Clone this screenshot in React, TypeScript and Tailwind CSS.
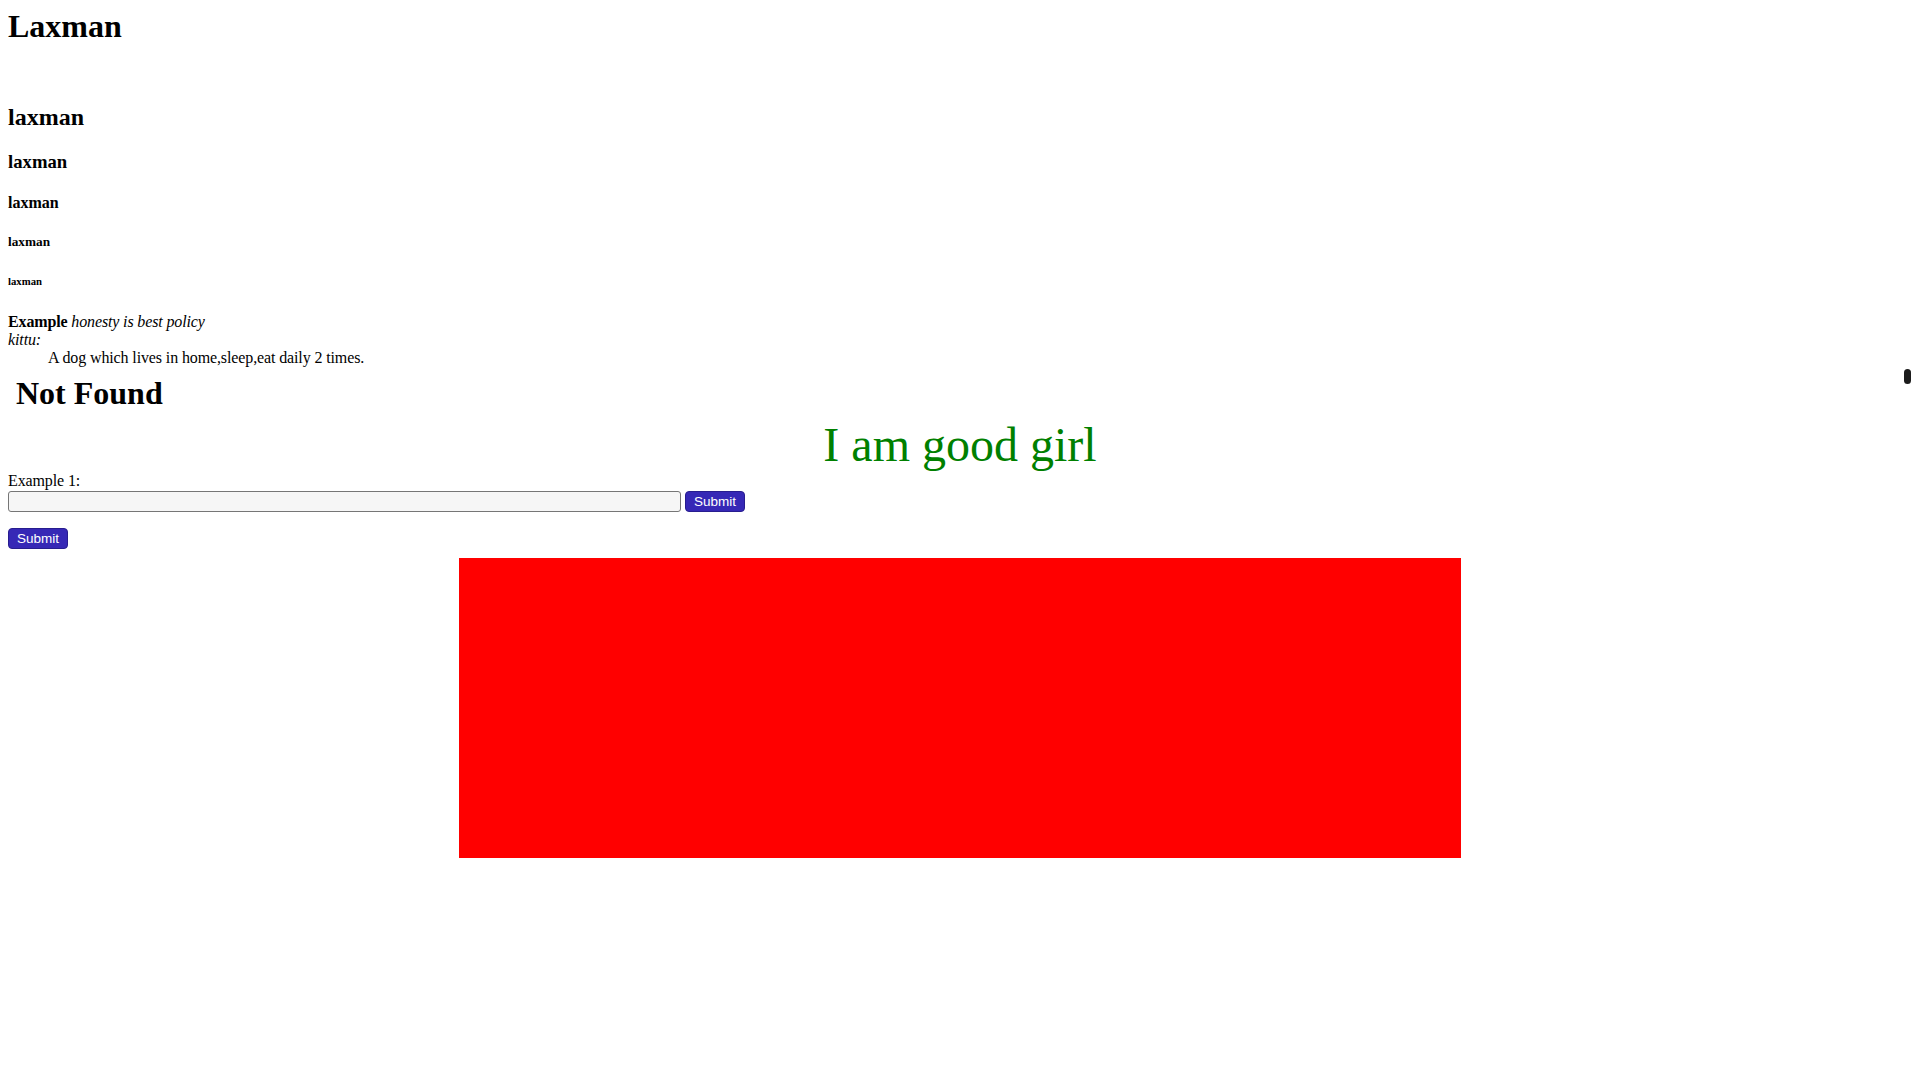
export default function App() {
  const serif = "font-['Liberation_Serif','Times_New_Roman',serif]";
  const button =
    "flex h-[21px] w-[60px] items-center justify-center rounded-[4px] border border-[#281d8f] bg-[#3628b6] font-['Liberation_Sans',Arial,sans-serif] text-[13.5px] text-white";

  return (
    <div className={`${serif} min-h-screen bg-white px-2 pt-2 text-[16px] leading-[normal] text-black`}>
      <h1 className="text-[32px] font-bold">Laxman</h1>

      <h2 className="mt-[59px] text-[24px] font-bold">laxman</h2>
      <h3 className="mt-[19.92px] text-[18.72px] font-bold">laxman</h3>
      <h4 className="mt-[21.28px] text-[16px] font-bold">laxman</h4>
      <h5 className="mt-[22.18px] text-[13.28px] font-bold">laxman</h5>
      <h6 className="mt-[24.98px] text-[10.72px] font-bold">laxman</h6>

      <div className="mt-[26px] tracking-[-0.14px]">
        <b>Example</b> <i>honesty is best policy</i>
      </div>
      <dt className="tracking-[-0.12px]">
        <i>kittu:</i>
      </dt>
      <dd className="ml-10 tracking-[-0.12px]">A dog which lives in home,sleep,eat daily 2 times.</dd>

      {/* frame that failed to load */}
      <div className="relative pl-2 pt-[7.4px]">
        <h1 className="text-[32px] font-bold">Not Found</h1>
        <span className="absolute right-[1px] top-[2px] h-[15px] w-[7px] rounded-full bg-[#1c1c1c]" />
      </div>

      <div className="mt-[5.6px] text-center text-[48px] text-[#008000]">I am good girl</div>

      <div className="tracking-[-0.12px]">Example 1:</div>
      <div className="mt-[0.5px] flex items-center gap-[4px]">
        <input
          type="text"
          className="h-[21px] w-[673px] rounded-[3px] border border-[#767676] bg-[#f6f6f6] px-[2px] outline-none"
        />
        <button type="button" className={button}>
          Submit
        </button>
      </div>

      <div className="mt-[16.5px]">
        <button type="button" className={button}>
          Submit
        </button>
      </div>

      <div className="mx-auto mt-[8.8px] h-[300px] w-[1002px] bg-[#ff0000]" />
    </div>
  );
}
